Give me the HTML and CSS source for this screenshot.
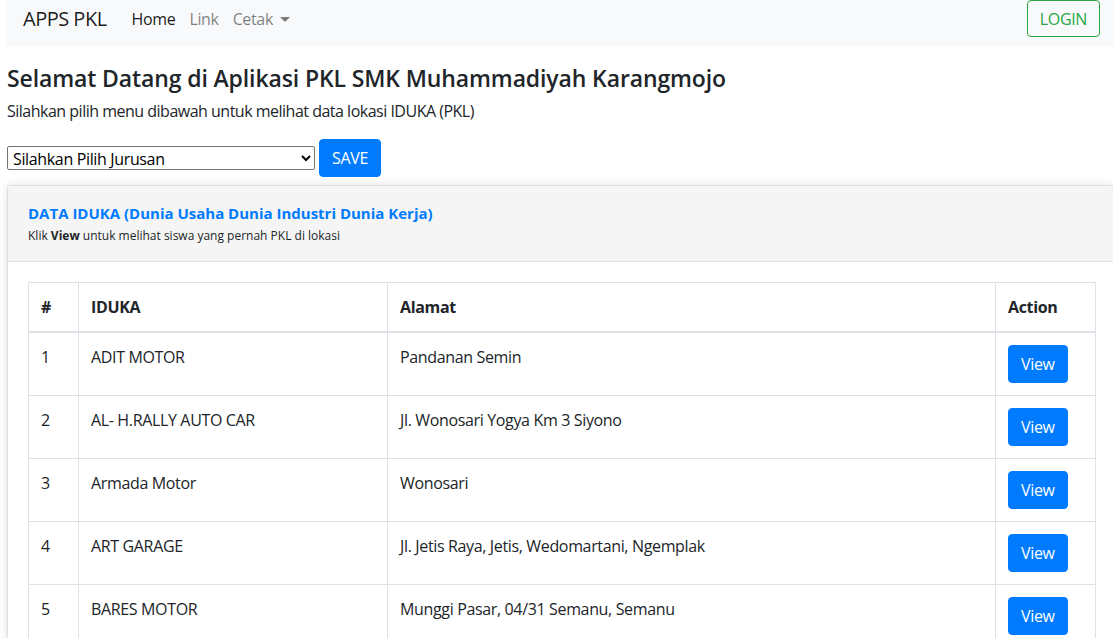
FILE: index.html
```html
<!DOCTYPE html>
<html lang="id">
<head>
<meta charset="utf-8">
<title>APPS PKL</title>
<link rel="stylesheet" href="styles.css">
</head>
<body>
<div class="page">
  <nav class="navbar">
    <a class="brand" href="#">APPS PKL</a>
    <ul class="nav">
      <li><a class="nav-link active" href="#">Home</a></li>
      <li><a class="nav-link" href="#">Link</a></li>
      <li><a class="nav-link dropdown" href="#">Cetak <span class="caret"></span></a></li>
    </ul>
    <button class="btn-login" type="button">LOGIN</button>
  </nav>

  <h1 class="title">Selamat Datang di Aplikasi PKL SMK Muhammadiyah Karangmojo</h1>
  <p class="lead">Silahkan pilih menu dibawah untuk melihat data lokasi IDUKA (PKL)</p>

  <form class="pick">
    <select class="select">
      <option>Silahkan Pilih Jurusan</option>
    </select>
    <button class="btn-primary" type="button">SAVE</button>
  </form>

  <div class="card">
    <div class="card-header">
      <div class="card-title">DATA IDUKA (Dunia Usaha Dunia Industri Dunia Kerja)</div>
      <div class="card-sub">Klik <b>View</b> untuk melihat siswa yang pernah PKL di lokasi</div>
    </div>
    <div class="card-body">
      <table class="table">
        <thead>
          <tr>
            <th class="c-no">#</th>
            <th class="c-name">IDUKA</th>
            <th class="c-addr">Alamat</th>
            <th class="c-act">Action</th>
          </tr>
        </thead>
        <tbody>
          <tr><td>1</td><td>ADIT MOTOR</td><td>Pandanan Semin</td><td><button class="btn-primary" type="button">View</button></td></tr>
          <tr><td>2</td><td>AL- H.RALLY AUTO CAR</td><td>Jl. Wonosari Yogya Km 3 Siyono</td><td><button class="btn-primary" type="button">View</button></td></tr>
          <tr><td>3</td><td>Armada Motor</td><td>Wonosari</td><td><button class="btn-primary" type="button">View</button></td></tr>
          <tr><td>4</td><td>ART GARAGE</td><td>Jl. Jetis Raya, Jetis, Wedomartani, Ngemplak</td><td><button class="btn-primary" type="button">View</button></td></tr>
          <tr><td>5</td><td>BARES MOTOR</td><td>Munggi Pasar, 04/31 Semanu, Semanu</td><td><button class="btn-primary" type="button">View</button></td></tr>
        </tbody>
      </table>
    </div>
  </div>
</div>
</body>
</html>
```
FILE: styles.css
```css
* { box-sizing: border-box; }
html, body {
  margin: 0;
  padding: 0;
  overflow: hidden;
  background: #fff;
}
body {
  font-family: "Open Sans", "Noto Sans", sans-serif;
  font-size: 16px;
  line-height: 24px;
  letter-spacing: -0.35px;
  color: #212529;
}
.page {
  width: 1109px;
  margin-left: 7px;
}
.navbar {
  height: 46px;
  background: #f8f9fa;
  display: flex;
  align-items: flex-start;
  padding: 0 16px;
}
.brand {
  font-size: 20px;
  line-height: 30px;
  letter-spacing: -0.5px;
  color: rgba(0,0,0,.9);
  text-decoration: none;
  margin-top: 4px;
  margin-right: 17px;
}
.nav {
  list-style: none;
  display: flex;
  margin: 0;
  padding: 0;
  margin-top: 7px;
  flex: 1;
}
.nav-link {
  display: block;
  padding: 0 7px;
  color: rgba(0,0,0,.5);
  text-decoration: none;
}
.nav-link.active { color: rgba(0,0,0,.9); padding-left: 8px; }
.caret {
  display: inline-block;
  width: 0;
  height: 0;
  margin-left: 3px;
  vertical-align: 3px;
  border-top: 5px solid rgba(0,0,0,.5);
  border-left: 5px solid transparent;
  border-right: 5px solid transparent;
}
.btn-login {
  font-family: inherit;
  font-size: 16px;
  line-height: 24px;
  letter-spacing: -0.35px;
  color: #28a745;
  background: transparent;
  border: 1px solid #28a745;
  border-radius: 4px;
  padding: 6px 12px;
  height: 37px;
}
.title {
  font-size: 23px;
  font-weight: 600;
  line-height: 29px;
  letter-spacing: -0.12px;
  margin: 18px 0 6px;
}
.lead {
  margin: 0 0 16px;
  letter-spacing: -0.5px;
}
.pick {
  display: flex;
  align-items: center;
  gap: 4px;
}
.select {
  width: 308px;
  height: 24px;
  font-family: inherit;
  font-size: 16px;
  letter-spacing: -0.35px;
  color: #000;
  border: 1px solid #767676;
  border-radius: 2px;
  background: #fff;
  padding: 0 1px;
}
.btn-primary {
  font-family: inherit;
  font-size: 16px;
  line-height: 24px;
  letter-spacing: -0.35px;
  color: #fff;
  background: #007bff;
  border: 1px solid #007bff;
  border-radius: 4px;
  padding: 6px 12px;
}
.card {
  margin-top: 8px;
  border: 1px solid rgba(0,0,0,.125);
  border-radius: 4px;
  box-shadow: 0 0 8px rgba(0,0,0,.12);
  background: #fff;
}
.card-header {
  background: #f5f5f5;
  border-bottom: 1px solid #dcdcdc;
  padding: 16px 20px 16px;
}
.card-title {
  color: #007bff;
  font-weight: 700;
  font-size: 15px;
  line-height: 22px;
  letter-spacing: 0;
}
.card-sub {
  font-size: 12px;
  line-height: 18px;
  letter-spacing: 0;
  margin-top: 3px;
}
.card-sub b { font-weight: 700; }
.card-body {
  padding: 20px;
}
.table {
  width: 100%;
  border-collapse: collapse;
  table-layout: fixed;
}
.table th, .table td {
  border: 1px solid #dee2e6;
  padding: 12px;
  text-align: left;
  vertical-align: top;
}
.table th {
  font-weight: 700;
  border-bottom: 2px solid #dee2e6;
}
.table td { height: 63px; }
.c-no { width: 50px; }
.c-name { width: 309px; }
.c-addr { width: 608px; }
.c-act { width: 100px; }
```
